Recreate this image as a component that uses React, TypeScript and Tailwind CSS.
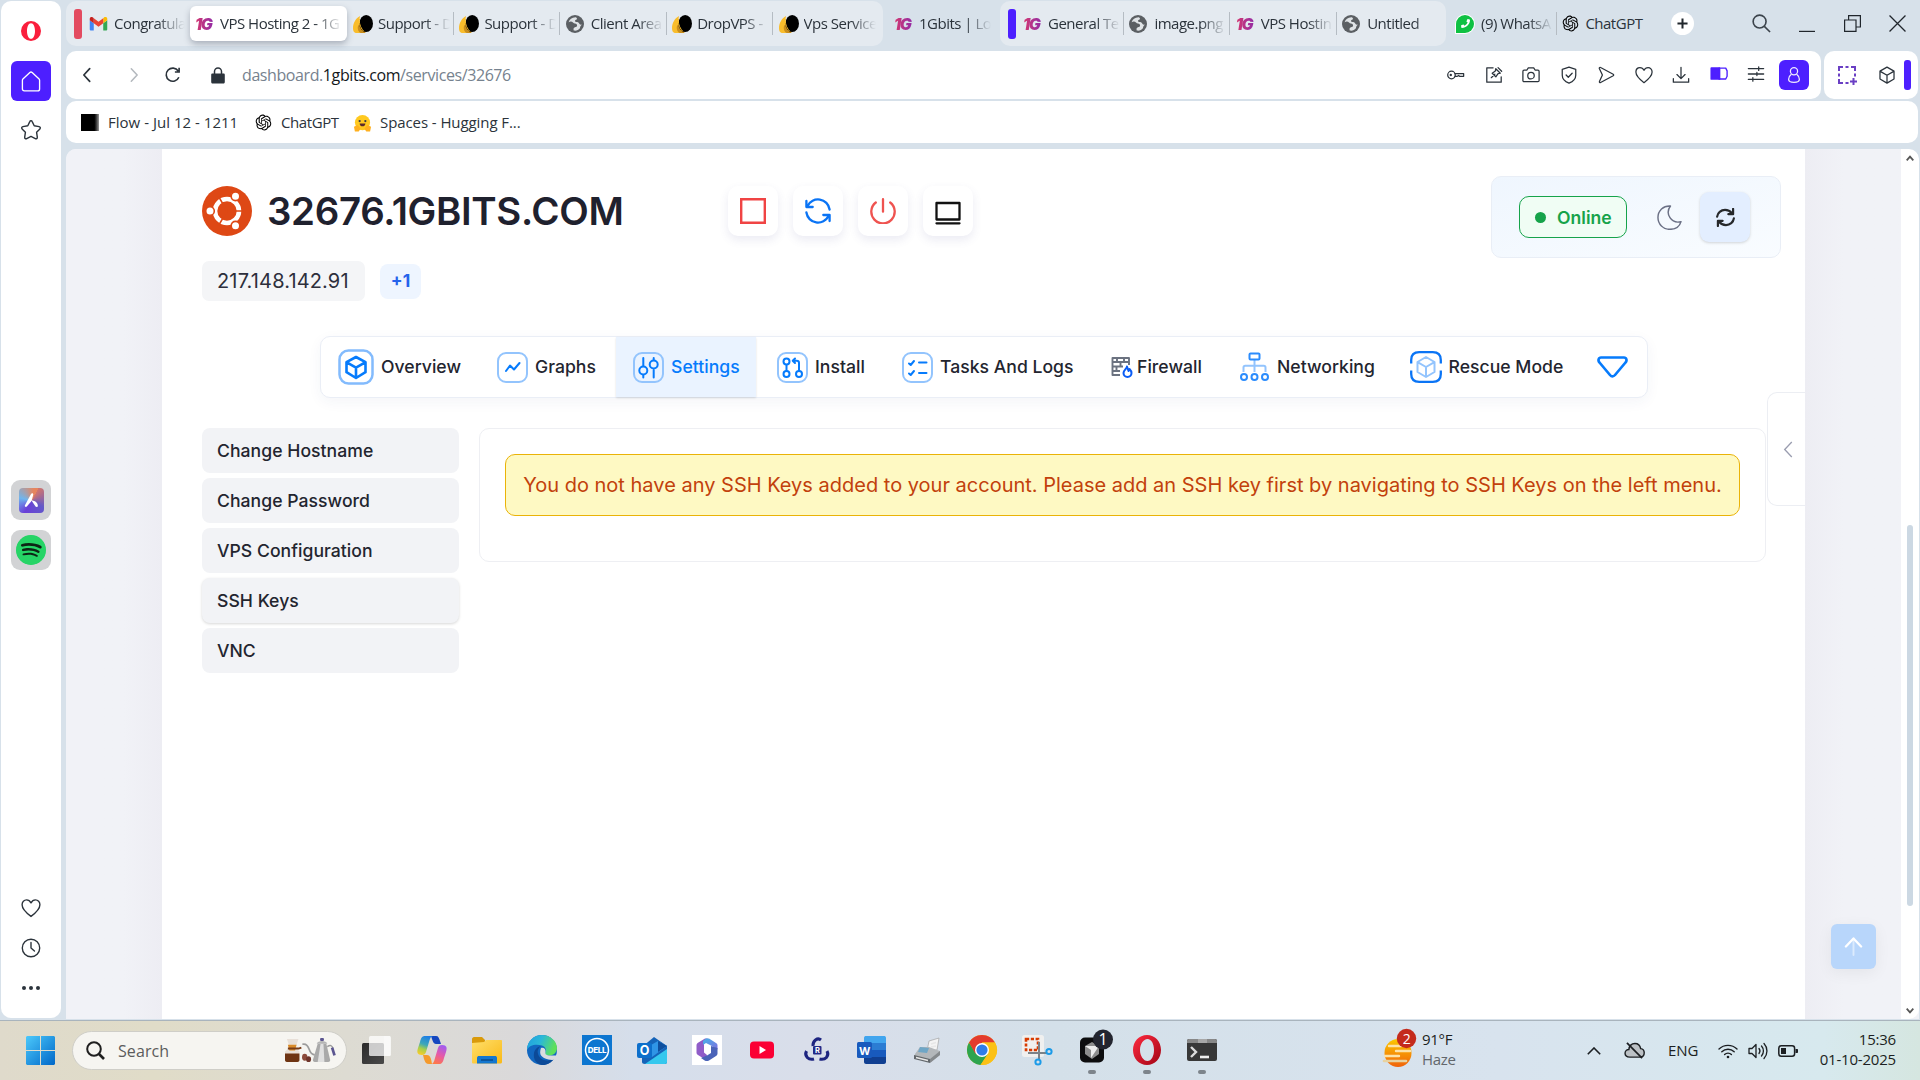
import React from "react";
import { RiOpenaiFill } from "react-icons/ri";
import { FaSpotify, FaPhoneAlt } from "react-icons/fa";

type P = { className?: string };

/* ---------- favicons ---------- */

const OneG = ({ className = "" }: P) => (
  <span
    className={`inline-block w-5 shrink-0 bg-gradient-to-r from-[#d6336c] to-[#8e24aa] bg-clip-text font-['Inter'] text-[16px] leading-5 font-black tracking-[-1.6px] text-transparent italic ${className}`}
  >
    1G
  </span>
);

const Gmail = ({ className = "" }: P) => (
  <svg viewBox="0 0 20 16" className={`h-[14px] w-[19px] shrink-0 ${className}`}>
    <path d="M1.4 15.5h3.2V7L0 3.6v10.5c0 .8.6 1.4 1.4 1.4z" fill="#4285f4" />
    <path d="M15.4 15.5h3.2c.8 0 1.4-.6 1.4-1.4V3.6L15.4 7z" fill="#34a853" />
    <path d="M15.4 1.5V7L20 3.6V2c0-1.8-2-2.7-3.4-1.7z" fill="#fbbc04" />
    <path d="M4.6 7V1.4L10 5.4l5.4-4V7L10 11z" fill="#ea4335" />
    <path d="M0 2v1.6L4.6 7V1.4L3.4.4C2-.7 0 .3 0 2z" fill="#c5221f" />
  </svg>
);

const Drop = ({ className = "" }: P) => (
  <svg viewBox="0 0 20 20" className={`size-5 shrink-0 ${className}`}>
    <path d="M7 2C3 4 0 9 0 14c0 3 1 5 4 5h7l2-4L6 8z" fill="#f9bd2c" />
    <path d="M5 12c-1 3 1 7 3 7h4l2-3-6-8z" fill="#c98d1c" />
    <ellipse cx="13.200" cy="9.500" rx="6.800" ry="8.600" fill="#000" />
    <path d="M6.500 5c-.5 4 .5 8 4 12" stroke="#f9bd2c" strokeWidth="1" fill="none" />
  </svg>
);

const Globe = ({ className = "" }: P) => (
  <svg viewBox="0 0 18 18" className={`size-[18px] shrink-0 ${className}`}>
    <circle cx="9" cy="9" r="9" fill="#5b5f63" />
    <path d="M10 2.200C6 2 3.500 4.300 2.600 7.200c1.500-1 3.400-.9 4.400.2 1 1.200 3 .8 3.800 2 .7 1.100.2 2.300-1 2.600-1.300.3-2.200.8-2.300 2l.2 1.500c2.700.5 4.800-.4 6-1.900.6-.9.2-1.700.9-2.600l1.300-1.400c-1.200.3-2.200-.1-2.700-1.100-.6-1.100-1.700-1.300-2.900-1.400-1.300-.1-1.700-1.300-.8-2 .8-.5 1.600-.8 1.500-1.700z" fill="#dfe3e6" />
  </svg>
);

const Gpt = ({ className = "" }: P) => <RiOpenaiFill className={`size-[19px] shrink-0 text-black ${className}`} />;

const Whats = ({ className = "" }: P) => (
  <span className={`flex size-[18px] shrink-0 items-center justify-center rounded-full rounded-bl-[4px] bg-[#0fc143] ring-1 ring-white ${className}`}>
    <FaPhoneAlt className="size-[9px] -scale-x-100 text-white" />
  </span>
);

/* ---------- tab strip ---------- */

function Tab({ icon, label, sep = true }: { icon: React.ReactNode; label: string; sep?: boolean }) {
  return (
    <div className="flex h-full w-[106.400px] shrink-0 items-center">
      <div className="ml-[6px] flex w-[25px] shrink-0 items-center">{icon}</div>
      <div className="w-[72px] shrink-0 overflow-hidden whitespace-nowrap [mask-image:linear-gradient(90deg,#000_65%,transparent)]">{label}</div>
      {sep && <div className="ml-[3px] h-[23px] w-px shrink-0 bg-[#b5bcc3]" />}
    </div>
  );
}

function TabStrip() {
  return (
    <div className="flex h-[46px] items-start pt-px text-[15px] tracking-[-0.500px] text-[#2b333b]">
      <div className="flex h-[45px] w-[817px] items-center rounded-[10px] bg-[#e4eaf0] pl-2">
        <div className="h-[30px] w-2 shrink-0 rounded-[3px] bg-[#e34b60]" />
        <Gmail className="ml-[7px]" />
        <div className="ml-[6px] w-[71px] shrink-0 overflow-hidden whitespace-nowrap [mask-image:linear-gradient(90deg,#000_60%,transparent)]">Congratula</div>
        <div className="ml-[5px] flex h-[35px] w-[157px] shrink-0 items-center rounded-md bg-white pl-[5px] shadow-[0_3px_6px_rgba(60,70,90,0.35)]">
          <OneG />
          <div className="ml-[5px] w-[122px] overflow-hidden whitespace-nowrap [mask-image:linear-gradient(90deg,#000_78%,transparent)]">VPS Hosting 2 - 1G</div>
        </div>
        <Tab icon={<Drop />} label="Support - D" />
        <Tab icon={<Drop />} label="Support - D" />
        <Tab icon={<Globe />} label="Client Area" />
        <Tab icon={<Drop />} label="DropVPS - " />
        <Tab icon={<Drop />} label="Vps Service" sep={false} />
      </div>
      <div className="flex h-[45px] w-[117px] items-center pl-[5px]">
        <Tab icon={<OneG />} label="1Gbits | Lo" sep={false} />
      </div>
      <div className="flex h-[45px] w-[446px] items-center rounded-[10px] bg-[#e4eaf0] pl-2">
        <div className="mr-px h-[30px] w-2 shrink-0 rounded-[3px] bg-[#4d1fff]" />
        <Tab icon={<OneG />} label="General Te" />
        <Tab icon={<Globe />} label="image.png" />
        <Tab icon={<OneG />} label="VPS Hostin" />
        <Tab icon={<Globe />} label="Untitled" sep={false} />
      </div>
      <div className="flex h-[45px] flex-1 items-center pl-[4px]">
        <Tab icon={<Whats />} label="(9) WhatsA" />
        <Gpt className="ml-[5px]" />
        <div className="ml-[5px] w-[60px] whitespace-nowrap">ChatGPT</div>
        <div className="ml-[26px] flex size-[23px] shrink-0 items-center justify-center rounded-full bg-white">
          <svg viewBox="0 0 12 12" className="size-[11px]"><path d="M6 .5v11M.5 6h11" stroke="#20262c" strokeWidth="2.200" /></svg>
        </div>
        <svg viewBox="0 0 20 20" className="ml-[58px] size-[19px]" fill="none" stroke="#3b434b" strokeWidth="1.700"><circle cx="8" cy="8" r="6.800" /><path d="M13 13l6 6" /></svg>
        <svg viewBox="0 0 16 16" className="ml-[28px] size-4" fill="none" stroke="#20262c" strokeWidth="1.200"><path d="M0 15.400h16" /></svg>
        <svg viewBox="0 0 17 17" className="ml-[29px] size-[17px]" fill="none" stroke="#20262c" strokeWidth="1.200"><path d="M.6 5h11.400v11.400H.6zM4.600 5V.6h11.800V12H12" /></svg>
        <svg viewBox="0 0 16 16" className="ml-[28px] size-[17px]" fill="none" stroke="#20262c" strokeWidth="1.200"><path d="M.5.5l15 15M15.500.5l-15 15" /></svg>
      </div>
    </div>
  );
}

/* ---------- toolbar ---------- */

const Ic = ({ children, className = "size-[18px]" }: { children: React.ReactNode; className?: string }) => (
  <svg viewBox="0 0 20 20" className={`h-[18px] w-[18px] shrink-0 ${className}`} fill="none" stroke="currentColor" strokeWidth="1.400" strokeLinecap="round" strokeLinejoin="round">
    {children}
  </svg>
);

const HeartPath = () => <path d="M10 18.500C4 14 1 10.500 1 6.700 1 3.800 3 1.800 5.500 1.800c2 0 3.600 1.200 4.500 3 .9-1.800 2.500-3 4.500-3C17 1.800 19 3.800 19 6.700c0 3.800-3 7.300-9 11.800z" />;

function Toolbar() {
  return (
    <div className="mt-[5px] flex h-12 gap-[3px]">
      <div className="flex w-[1755px] items-center rounded-[10px] bg-white text-[#2b333b]">
        <Ic className="ml-[12px]"><path d="M13 3L6.500 10 13 17" strokeWidth="1.900" /></Ic>
        <Ic className="ml-[29px] text-[#b4b9be]"><path d="M7 3l6.500 7L7 17" strokeWidth="1.700" /></Ic>
        <Ic className="ml-[21px]"><path d="M16.500 12.500A7.300 7.300 0 1 1 15.800 5.500M16.800 2v4.700h-4.700" strokeWidth="1.800" strokeLinecap="butt" strokeLinejoin="miter" /></Ic>
        <svg viewBox="0 0 14 17" className="ml-[29px] h-[17px] w-[14px] shrink-0"><path d="M1.500 6.500h11c.8 0 1.300.5 1.300 1.300V15c0 .8-.5 1.500-1.300 1.500h-11C.7 16.500.2 15.800.2 15V7.800c0-.8.500-1.300 1.300-1.300z" fill="#2b333b" /><path d="M3.500 7V4.500a3.500 3.500 0 0 1 7 0V7" stroke="#2b333b" strokeWidth="1.500" fill="none" /></svg>
        <div className="ml-[17px] w-[1205px] shrink-0 text-[16px] tracking-[-0.410px] text-[#76828e]">
          dashboard.<span className="text-[#14181c]">1gbits.com</span>/services/32676
        </div>
        <div className="flex items-center gap-[19.500px]">
          <Ic><circle cx="5" cy="10" r="4.200" /><path d="M8.700 8.500H18.500v3h-4.500l-1-1-1.500 1H8.700" /><circle cx="4.200" cy="10" r=".6" /></Ic>
          <Ic><path d="M9 2H2v16h16v-6M7 13l4-4M12 3l5 5-2.500.5L12 12 8 8l3.500-2.500zM14.500 1.800l4 4" /></Ic>
          <Ic><path d="M1 6c0-.8.500-1.300 1.300-1.300h3L7 2h6l1.700 2.700h3c.8 0 1.300.5 1.300 1.300v10c0 .8-.5 1.300-1.300 1.300H2.300C1.500 17.300 1 16.800 1 16z" /><circle cx="10" cy="10.700" r="3.600" /></Ic>
          <Ic><path d="M10 1.200l7.500 2.500v6.500c0 4-3 7-7.500 8.800-4.500-1.800-7.500-4.800-7.500-8.800V3.700zM6.800 10l2.400 2.500 4.300-4.500" /></Ic>
          <Ic><path d="M2.500 2.500c0-.8.8-1.200 1.500-.8l14 7.500c.7.400.7 1.200 0 1.600l-14 7.500c-.7.400-1.600-.2-1.300-1L6 10 2.700 3z" /></Ic>
          <Ic><HeartPath /></Ic>
          <Ic><path d="M10 1.500v12M5.500 9.500L10 14l4.500-4.500M1.500 14v4h17v-4" /></Ic>
          <Ic className="-mt-[3px] text-[#4d1fff]"><path d="M1.500 3.500h9v12h-9z" fill="currentColor" strokeWidth="2" /><path d="M10 3.500h7.500l1.500 3v6l-1.500 3H10" strokeWidth="1.500" /></Ic>
          <Ic className="-mt-[2px]"><path d="M1.500 4h17M1.500 10h17M1.500 16h17M13 2v4M6.500 14v4M11 8.200v3.600" /></Ic>
        </div>
        <div className="ml-[14px] flex size-[30px] shrink-0 items-center justify-center rounded-md bg-[#4d1fff] text-[#efeaff]">
          <Ic><circle cx="10" cy="5.800" r="4" /><path d="M6.800 9.500C5 10.800 4 12.600 4 14.800 4 17.500 6.500 18.300 10 18.300s6-.8 6-3.500c0-2.200-1-4-2.800-5.300" /></Ic>
        </div>
      </div>
      <div className="flex w-[94px] items-center rounded-[10px] bg-white">
        <svg viewBox="0 0 20 20" className="ml-[13px] size-5" fill="none" stroke="#6a3fc4" strokeWidth="2"><path d="M2 6V2h4M8.500 2h3M14 2h4v4M18 8.500v3M2 8.500v3M2 14v4h4M8.500 18h3M13 16.500h7M16.500 13v7" /></svg>
        <Ic className="ml-[21px] text-[#2b333b]"><path d="M10 1.200l7.800 4.500v8.800L10 19l-7.800-4.500V5.700zM2.500 6L10 10.200 17.500 6M10 10.200V19" /></Ic>
        <div className="ml-[8px] h-[30px] w-[7px] shrink-0 rounded-[3px] bg-[#4d1fff]" />
      </div>
    </div>
  );
}

function Bookmarks() {
  return (
    <div className="mt-[2px] flex h-[42px] w-[1852px] items-center rounded-[10px] bg-white pt-px text-[15px] tracking-[-0.400px] text-[#2b333b]">
      <div className="ml-[15px] h-[17px] w-[18px] bg-gradient-to-r from-black from-70% to-[#999]" />
      <div className="ml-[9px] w-[136px] whitespace-nowrap tracking-[0.020px]">Flow - Jul 12 - 1211</div>
      <Gpt className="ml-[10px]" />
      <div className="ml-[8px] w-[64px]">ChatGPT</div>
      <svg viewBox="0 0 20 18" className="ml-[8px] h-[18px] w-[19px]">
        <circle cx="10" cy="8.500" r="8" fill="#ffc91f" />
        <path d="M1 13l4-2 3 4-2 3H2zM19 13l-4-2-3 4 2 3h4z" fill="#ffb01f" />
        <circle cx="7" cy="7" r="1.200" fill="#3a3b45" /><circle cx="13" cy="7" r="1.200" fill="#3a3b45" />
        <path d="M7 9.500h6c0 4-6 4-6 0z" fill="#5b2b2b" />
      </svg>
      <div className="ml-[8px] whitespace-nowrap tracking-[-0.080px]">Spaces - Hugging F...</div>
    </div>
  );
}

/* ---------- browser sidebar ---------- */

function Sidebar() {
  return (
    <div className="mt-px ml-px flex h-[1017px] w-[60px] flex-col items-center rounded-[10px] bg-white text-[#2b333b]">
      <svg viewBox="0 0 20 20" className="mt-5 size-5"><path fillRule="evenodd" d="M10 0a10 10 0 1 0 0 20 10 10 0 0 0 0-20zm0 2.200c2.500 0 4 3.500 4 7.800s-1.500 7.800-4 7.800S6 14.300 6 10s1.500-7.800 4-7.800z" fill="#fa1e3c" /></svg>
      <div className="mt-5 flex size-10 items-center justify-center rounded-md bg-[#4d1fff]">
        <svg viewBox="0 0 20 22" className="h-[21px] w-5" fill="none" stroke="#fff" strokeWidth="1.400" strokeLinejoin="round"><path d="M8.800 1.500c.7-.6 1.700-.6 2.400 0l7 6.500c.5.600.8 1 .8 1.800v9c0 1.200-.8 2-2 2H3c-1.200 0-2-.8-2-2v-9c0-.8.300-1.200.8-1.800z" /></svg>
      </div>
      <svg viewBox="0 0 22 22" className="mt-[18px] mr-px size-[22px]" fill="none" stroke="currentColor" strokeWidth="1.400" strokeLinejoin="round"><path d="M11 1.800c.5 0 1 .3 1.200.8l2 4.200 4.900.8c1.200.2 1.600 1.500.8 2.300l-3.300 3.400.7 4.900c.1 1.200-1 2-2 1.400L11 17.400l-4.300 2.200c-1 .6-2.100-.2-2-1.400l.7-4.900L2.100 9.900c-.8-.8-.4-2.100.8-2.300l4.900-.8 2-4.200c.2-.5.700-.8 1.200-.8z" /></svg>
      <div className="mt-[339px] flex size-10 items-center justify-center rounded-[9px] bg-[#d2d3d5]">
        <div className="flex size-[25px] items-center justify-center rounded-[4px] bg-[conic-gradient(from_30deg,#d2756b,#6359c9_25%,#6a3fd8_50%,#6fb6ee_70%,#e6855e_95%)]">
          <svg viewBox="0 0 16 16" className="size-[15px]"><path d="M7.500 1c1-1.500 2.800-.5 2.300 1L8.500 7c-.5 2-1.500 3-3 4.500l-2.500 3c-1.200 1-2.600 0-2-1.500zM8 8c3.800 0 6.500 2.300 6.800 5.500.1 1.500-1.500 2-2.500 1z" fill="#fff" /></svg>
        </div>
      </div>
      <div className="mt-[10px] flex size-10 items-center justify-center rounded-[9px] bg-[#d2d3d5]">
        <span className="flex size-[30px] items-center justify-center rounded-full bg-[radial-gradient(#0d2415_60%,#26d466_62%)]"><FaSpotify className="size-[30px] text-[#26d466]" /></span>
      </div>
      <Ic className="mt-[329px] mr-px scale-110"><HeartPath /></Ic>
      <Ic className="mt-[22px] mr-px scale-110"><circle cx="10" cy="10" r="8.800" /><path d="M10 4.500V10l3.500 3" /></Ic>
      <div className="mt-[29px] mr-px flex gap-[3px]">
        <i className="size-1 rounded-full bg-[#2b333b]" /><i className="size-1 rounded-full bg-[#2b333b]" /><i className="size-1 rounded-full bg-[#2b333b]" />
      </div>
    </div>
  );
}

/* ---------- page ---------- */

const Ubuntu = () => (
  <svg viewBox="0 0 50 50" className="size-[50px]">
    <circle cx="25" cy="25" r="25" fill="#de4815" />
    <circle cx="25" cy="25" r="12" fill="none" stroke="#fff" strokeWidth="4.600" />
    <path d="M25 25h17M25 25l-8.500-14.700M25 25l-8.500 14.700" stroke="#de4815" strokeWidth="1.600" />
    <g fill="#fff" stroke="#de4815" strokeWidth="1.600"><circle cx="8" cy="25" r="4.300" /><circle cx="33.500" cy="10.300" r="4.300" /><circle cx="33.500" cy="39.700" r="4.300" /></g>
  </svg>
);

const Action = ({ children }: { children: React.ReactNode }) => (
  <div className="flex size-[50px] items-center justify-center rounded-[10px] bg-white shadow-[0_4px_10px_rgba(70,70,150,0.110)]">{children}</div>
);

function Header() {
  return (
    <div className="flex">
      <div className="w-[526px] pt-[10px]">
        <div className="flex h-[50px] items-center">
          <Ubuntu />
          <h1 className="ml-[15px] text-[38.400px] leading-[50px] font-semibold tracking-[-0.320px] whitespace-nowrap text-[#1f212e]">32676.1GBITS.COM</h1>
        </div>
        <div className="mt-[25px] flex items-center">
          <div className="flex h-10 w-[163px] items-center rounded-[7px] bg-[#f4f5f7] pl-[15px] text-[20px] tracking-[0.150px] text-[#2d2f3c]">217.148.142.91</div>
          <div className="ml-[15px] flex h-[35px] w-[41px] items-center justify-center rounded-lg bg-[#eef5ff] pt-px text-[17.500px] font-bold text-[#2563eb]">+1</div>
        </div>
      </div>
      <div className="flex gap-[15px] pt-[10px]">
        <Action><svg viewBox="0 0 26 26" className="size-[26px]"><path d="M1.200 1.200h23.600v23.600H1.200z" fill="none" stroke="#f04444" strokeWidth="2.400" /></svg></Action>
        <Action><svg viewBox="0 0 26 26" className="size-[26px]" fill="none" stroke="#0a74f5" strokeWidth="2.300" strokeLinecap="round" strokeLinejoin="round"><path d="M24.600 11.500A11.700 11.700 0 0 0 2.500 8M1.400 3v6h6.300M1.400 14.500A11.700 11.700 0 0 0 23.500 18M24.600 23v-6h-6.300" /></svg></Action>
        <Action><svg viewBox="0 0 26 26" className="size-[26px]" fill="none" stroke="#ef5350" strokeWidth="2.300" strokeLinecap="round"><path d="M13 1.200v12.500M5.800 4.500a11.700 11.700 0 1 0 14.400 0" /></svg></Action>
        <Action><svg viewBox="0 0 26 26" className="mt-[3px] size-[26px]" fill="none" stroke="#111" strokeWidth="2.300" strokeLinejoin="round"><path d="M1.500 3h23v16.500h-23zM1.500 23.300h23" strokeLinecap="round" /></svg></Action>
      </div>
      <div className="ml-auto flex h-[82px] w-[290px] rounded-[10px] border border-[#e9eef6] bg-gradient-to-br from-[#eff6fe] to-[#f9fcff] pl-[27px]">
        <div className="mt-[19px] flex h-[42px] w-[108px] items-center rounded-[10px] border border-[#16a34a] bg-[#f0fdf4] pl-[15px] text-[17.600px] font-semibold text-[#16a34a]">
          <span className="mr-[11px] size-[11px] rounded-full bg-[#16a34a]" />
          <span className="pt-[2px]">Online</span>
        </div>
        <svg viewBox="0 0 26 26" className="mt-[28px] ml-[30px] size-[25px]" fill="none" stroke="#6b7085" strokeWidth="1.500" strokeLinejoin="round"><path d="M14 1C6.500.5 1 6 1 13c0 7 5.500 12.300 12.300 12.300 5.500 0 10.200-3 11.700-8C15 20 8 9 14 1z" /></svg>
        <div className="mt-[15px] ml-[18px] flex size-[50px] items-center justify-center rounded-[9px] bg-[#e3eeff] shadow-[0_1px_3px_rgba(0,0,0,0.160)]">
          <svg viewBox="0 0 20 20" className="size-[19px]" fill="none" stroke="#26282b" strokeWidth="2.300" strokeLinecap="round" strokeLinejoin="round"><path d="M1.200 9c.5-4 4-7 8.300-7 3 0 5.500 1.300 7.200 3.500M18 1v5.500h-5M18.800 11c-.5 4-4 7-8.300 7-3 0-5.500-1.300-7.200-3.500M2 19v-5.500h5" /></svg>
        </div>
      </div>
    </div>
  );
}

const Box = ({ children }: { children: React.ReactNode }) => (
  <svg viewBox="0 0 31 31" className="size-[31px]" fill="none" stroke="#067bfc" strokeWidth="2" strokeLinecap="round" strokeLinejoin="round">
    <rect x="1" y="1" width="29" height="29" rx="8" stroke="#93c4fd" />
    {children}
  </svg>
);

const CubeLines = () => <path d="M15.500 5.500l8.500 5v10l-8.500 5-8.500-5v-10zM7.500 10.800l8 4.700 8-4.700M15.500 15.500v9.500" />;

function NavItem({ icon, label, className }: { icon: React.ReactNode; label: string; className: string }) {
  return (
    <div className={`flex h-full shrink-0 items-center whitespace-nowrap ${className}`}>
      {icon}
      <span className="pt-px">{label}</span>
    </div>
  );
}

function Nav() {
  return (
    <div className="ml-[118px] flex h-[62px] w-[1328px] items-center rounded-[10px] border border-[#eaeef6] bg-white text-[17.600px] font-[450] tracking-[0.020px] text-[#23252f] shadow-[0_4px_14px_rgba(40,60,120,0.050)]">
      <NavItem
        className="w-[159px] gap-[7px] pl-[17px]"
        label="Overview"
        icon={
          <svg viewBox="0 0 36 36" className="size-9" fill="none" stroke="#067bfc" strokeWidth="2.600" strokeLinecap="round" strokeLinejoin="round">
            <rect x="1.500" y="1.500" width="33" height="33" rx="9" stroke="#83bbfd" strokeWidth="2.500" />
            <path d="M18 8l9.500 5.200v10L18 29l-9.500-5.800v-10zM8.800 13.300l9.200 5.400 9.200-5.400M18 18.700V28.500" />
          </svg>
        }
      />
      <NavItem className="w-[136px] gap-[7px] pl-[17px]" label="Graphs" icon={<Box><path d="M9 19l4-5.500 4 4L22.500 11" /></Box>} />
      <NavItem
        className="w-[140px] gap-[7px] bg-[#eaf3ff] pl-[17px] text-[#067bfc] shadow-[0_1px_2px_rgba(0,0,0,0.120)]"
        label="Settings"
        icon={<Box><path d="M10.300 6v8M10.300 23v2.500M20.700 25.500V18M20.700 6v2" /><circle cx="10.300" cy="18.500" r="4" /><circle cx="20.700" cy="12.500" r="4" /></Box>}
      />
      <NavItem
        className="w-[125px] gap-[7px] pl-[21px]"
        label="Install"
        icon={<Box><circle cx="9.500" cy="9.500" r="3" /><circle cx="9.500" cy="22" r="3" /><circle cx="22" cy="22" r="3" /><path d="M9.500 13v5.500M22 18.500V11c0-1.500-.8-2.300-2.300-2.300H16M18 6.500l-2.300 2.200L18 11" /></Box>}
      />
      <NavItem
        className="w-[209px] gap-[7px] pl-[21px]"
        label="Tasks And Logs"
        icon={<Box><path d="M17 10.500h7.500M17 21h7.500M7 11.500l1.700 1.500L12 9M7 21.500L8.700 23 12 19" /></Box>}
      />
      <NavItem
        className="w-[128px] gap-[4px] pl-[21px]"
        label="Firewall"
        icon={
          <svg viewBox="0 0 22 22" className="size-[22px]" fill="none" stroke="#6b7280" strokeWidth="1.900" strokeLinejoin="round">
            <path d="M18 9V2H1.500v17H9M1.500 6h16.500M1.500 10.500H12M1.500 15H9M6 2v4M13 2v4M9.500 6v4.500M5.500 10.500V15" />
            <path d="M16 10.500c0 2-3.500 3.500-3.500 6.500 0 2.300 1.700 4 4 4s4-1.700 4-4c0-2-1-3-2-4l-1 2z" stroke="#0a5cf5" strokeWidth="2" fill="#fff" />
          </svg>
        }
      />
      <NavItem
        className="w-[170px] gap-[8px] pl-[22px]"
        label="Networking"
        icon={
          <svg viewBox="0 0 29 30" className="h-[30px] w-[29px]" fill="none" stroke="#2b8cfd" strokeWidth="2">
            <path d="M14.500 8v12M3.500 20v-4.500c0-1 .7-1.700 1.700-1.700h18.600c1 0 1.700.7 1.700 1.700V20" stroke="#93c4fd" />
            <rect x="9.500" y="1.500" width="10" height="6" rx="1" />
            <circle cx="4" cy="25" r="3" /><circle cx="14.500" cy="25" r="3" /><circle cx="25" cy="25" r="3" />
          </svg>
        }
      />
      <NavItem
        className="w-[188px] gap-[7px] pl-[21.500px]"
        label="Rescue Mode"
        icon={
          <svg viewBox="0 0 32 32" className="size-8" fill="none" stroke="#93c4fd" strokeWidth="2" strokeLinejoin="round">
            <path d="M1.200 12.500V9c0-5 3-7.800 8-7.800h13.600c5 0 8 2.800 8 7.800v3.500M1.200 19.500V23c0 5 3 7.800 8 7.800h13.600c5 0 8-2.800 8-7.800v-3.500" stroke="#0a74f5" strokeWidth="2.300" />
            <g transform="translate(.5 .5)"><CubeLines /></g>
          </svg>
        }
      />
      <svg viewBox="0 0 31 22" className="ml-[21px] h-[22px] w-[31px]" fill="none" stroke="#067bfc" strokeWidth="2.700" strokeLinejoin="round"><path d="M4 1.500h23c2.500 0 3.300 3 1.500 5L18 19c-1.500 1.800-3.500 1.800-5 0L2.500 6.500C.7 4.500 1.500 1.500 4 1.500z" /></svg>
    </div>
  );
}

const menu = ["Change Hostname", "Change Password", "VPS Configuration", "SSH Keys", "VNC"];

function Page() {
  return (
    <div className="mt-[6px] flex h-[870px] w-[1853px] overflow-hidden rounded-t-[10px] bg-[#f1f2f7]">
      <div className="w-24 shrink-0 bg-gradient-to-r from-[#f1f2f7] from-60% to-[#ededf3]" />
      <main className="flex w-[1643px] shrink-0 flex-col bg-white pt-[27px] pl-10 font-['Inter',sans-serif]">
        <div className="w-[1579px]"><Header /></div>
        <div className="mt-[35px] flex">
          <div className="w-[1565px] shrink-0">
            <Nav />
            <div className="mt-[30px] flex items-start">
              <div className="flex w-[257px] flex-col gap-[5px] text-[17.600px] font-[450] tracking-[0.040px] text-[#23252f]">
                {menu.map((m) => (
                  <div key={m} className={`flex h-[45px] items-center rounded-lg bg-[#f2f3f6] pt-px pl-[15px] ${m === "SSH Keys" ? "shadow-[0_1px_3px_rgba(0,0,0,0.160)]" : ""}`}>{m}</div>
                ))}
              </div>
              <div className="ml-5 h-[134px] w-[1287px] rounded-[10px] border border-[#eeeff3] px-[25px] pt-[25px]">
                <div className="flex h-[62px] items-center justify-center rounded-[10px] border border-[#eab308] bg-[#fef9c3] text-[20px] whitespace-nowrap text-[#c2410c]">
                  You do not have any SSH Keys added to your account. Please add an SSH key first by navigating to SSH Keys on the left menu.
                </div>
              </div>
            </div>
          </div>
          <div className="mt-[56px] flex h-[114px] w-[39px] shrink-0 items-center rounded-l-[10px] border border-r-0 border-[#eceef3] bg-white pl-[15px]">
            <svg viewBox="0 0 10 18" className="h-[17px] w-[10px]" fill="none" stroke="#9a9db0" strokeWidth="1.400"><path d="M9 1L1.500 9 9 17" /></svg>
          </div>
        </div>
      </main>
      <div className="flex flex-1 items-end bg-gradient-to-r from-[#ededf3] to-[#f1f2f7] to-40% pb-[50px] pl-[26px]">
        <div className="flex size-[45px] items-center justify-center rounded-md bg-[#b8d6fb] shadow-[0_4px_16px_rgba(0,0,0,0.060)]">
          <svg viewBox="0 0 20 20" className="size-[19px]" fill="none" strokeLinecap="round" strokeLinejoin="round"><path d="M10 3v16" stroke="#dcebfd" strokeWidth="2" /><path d="M2 10l8-8.500 8 8.500" stroke="#fff" strokeWidth="2.400" /></svg>
        </div>
      </div>
      <div className="flex w-[18px] shrink-0 flex-col items-center rounded-r-[10px] bg-white">
        <svg viewBox="0 0 8 6" className="mt-[6px] h-[6px] w-2"><path d="M.7 5.300L4 1.700l3.300 3.600" stroke="#555" strokeWidth="1.800" fill="none" /></svg>
        <div className="mt-[364px] h-[381px] w-[6px] rounded-full bg-[#ccd8e3]" />
        <svg viewBox="0 0 8 6" className="mt-[102px] h-[6px] w-2"><path d="M.7.7L4 4.300 7.300.7" stroke="#555" strokeWidth="1.800" fill="none" /></svg>
      </div>
    </div>
  );
}

/* ---------- taskbar ---------- */

const S = ({ children, running = false }: { children: React.ReactNode; running?: boolean }) => (
  <div className="flex h-full w-[55px] shrink-0 flex-col items-center pt-[14px]">
    <svg viewBox="0 0 30 30" className="size-[30px] overflow-visible">{children}</svg>
    {running && <div className="mt-[5px] h-1 w-2 rounded-full bg-[#7d848b]" />}
  </div>
);

const LinGrad = ({ id, a, b }: { id: string; a: string; b: string }) => (
  <linearGradient id={id} x1="0" y1="0" x2="1" y2="1"><stop offset="0" stopColor={a} /><stop offset="1" stopColor={b} /></linearGradient>
);

function SearchArt() {
  return (
    <svg viewBox="0 0 54 26" className="h-[25px] w-[54px] shrink-0">
      <path d="M3 1h12l-3 9 4 4v9c0 1.500-1 2-2 2H3c-1.500 0-2-1-2-2v-9l5-4z" fill="#e8e0d8" />
      <path d="M4 7h9l-1.500 6h-6z" fill="#d98c2b" /><path d="M1 16h15v7c0 1.500-1 2-2 2H3c-1.500 0-2-1-2-2z" fill="#6e3413" />
      <path d="M4 11h11l3-1" stroke="#7a3c17" strokeWidth="2" fill="none" />
      <ellipse cx="21.500" cy="20" rx="2.800" ry="3.600" fill="#8c4a3a" /><ellipse cx="25.500" cy="22" rx="2.600" ry="3" fill="#6e342a" />
      <path d="M19 6.500c4-1 6 2 7 5s3 6 6 6" stroke="#9c9c9c" strokeWidth="1.800" fill="none" />
      <path d="M35 6h9l4 17c0 1.500-1 2-2 2H32c-1.500 0-2-1-2-2z" fill="#a9a9a9" /><path d="M38 6h3l1 19h-7z" fill="#e0e0e0" />
      <path d="M34 6c1-4 10-4 11 0z" fill="#b5b5b5" /><rect x="37.500" y="0" width="4" height="3" rx="1" fill="#5b5590" />
      <path d="M45 9c3-2 5-1.500 6 2" stroke="#9a9a9a" strokeWidth="1.400" fill="none" /><path d="M50 10l2.500 8" stroke="#5b5590" strokeWidth="2.800" fill="none" />
    </svg>
  );
}

function Taskbar() {
  return (
    <div className="flex h-[60px] items-center border-t border-[#a9b4bd] bg-[linear-gradient(90deg,#dfdacb_0%,#e0dcc8_8%,#dddbd2_18%,#dad9da_27%,#d5deeb_33%,#d9deea_42%,#d4e0e9_55%,#d8e3ee_78%,#d7e9ee_95%,#d5e6e0_100%)] text-[15px] tracking-[-0.300px] text-[#1c1f22]">
      <svg viewBox="0 0 29 29" className="ml-[26px] size-[29px]">
        <defs><LinGrad id="win" a="#4cc9fb" b="#0067c8" /></defs>
        <path d="M1 0h13v14H0V1zM15 0h13l1 1v13H15zM0 15h14v14H1l-1-1zM15 15h14v13l-1 1H15z" fill="url(#win)" />
      </svg>
      <div className="ml-[17px] flex h-[39px] w-[275px] items-center rounded-full border border-[#cfcec8] bg-[#f6f5f1] pl-[13px]">
        <svg viewBox="0 0 19 19" className="size-[19px]" fill="none" stroke="#1f1f1f" strokeWidth="2"><circle cx="8" cy="8" r="6.800" /><path d="M13 13l5 5" strokeWidth="2.600" /></svg>
        <span className="ml-[13px] w-[165px] text-[16px] tracking-[0.100px] text-[#5c5c5c]">Search</span>
        <SearchArt />
      </div>
      <div className="ml-[2px] flex h-full">
        <S><defs><LinGrad id="tv" a="#2a2a2a" b="#4a4a4a" /></defs><rect x="0" y="8" width="22" height="21" rx="1.500" fill="url(#tv)" /><rect x="7" y="1" width="22" height="20" rx="1.500" fill="#fff" opacity=".75" /><path d="M22 1h6v20h-6z" fill="#fff" opacity=".4" /></S>
        <S>
          <defs>
            <linearGradient id="cp1" x1=".6" y1="0" x2=".3" y2="1"><stop offset="0" stopColor="#1d7ee6" /><stop offset=".45" stopColor="#3fa8b8" /><stop offset=".7" stopColor="#a9cf4a" /><stop offset="1" stopColor="#f6cc2a" /></linearGradient>
            <linearGradient id="cp2" x1=".7" y1="0" x2=".3" y2="1"><stop offset="0" stopColor="#a05cf0" /><stop offset=".5" stopColor="#e65aa8" /><stop offset="1" stopColor="#ff7a45" /></linearGradient>
          </defs>
          <path d="M15 1h4c2.500 0 3 2 4 5l1 3h-5c-3 0-3.500-4-5-8z" fill="#1547c0" />
          <path d="M8 1h8c-2 0-3 2-4 6l-3 10c-.7 2-1.500 3-4 3C0 20-.3 17 1 13L3 7c1-4 2-6 5-6z" fill="url(#cp1)" />
          <path d="M6 20h4c3 0 4 3 5 9h-3c-3 0-4-2-5-5z" fill="#f59a2c" />
          <path d="M22 29h-8c2 0 3-2 4-6l3-10c.7-2 1.500-3 4-3 5 0 5.300 3 4 7l-2 6c-1 4-2 6-5 6z" fill="url(#cp2)" />
        </S>
        <S><defs><LinGrad id="fo" a="#ffdf6b" b="#f9b917" /></defs><path d="M0 4c0-1 1-2 2-2h8l3 3v6H0z" fill="#d99a0b" /><path d="M0 8l12-1 2-2h15c.6 0 1 .4 1 1v21c0 1-1 1.500-1.500 1.500h-27C.5 28.500 0 28 0 27z" fill="url(#fo)" /><path d="M5 28.500V23c0-1.500 1-2 2-2h16c1 0 2 .5 2 2v5.500z" fill="#1477cf" /><path d="M9 25h12" stroke="#0a4b8c" strokeWidth="1.500" /></S>
        <S>
          <defs><linearGradient id="ed" x1="0" y1="0" x2="1" y2=".3"><stop offset="0" stopColor="#1f9fe0" /><stop offset=".5" stopColor="#2bb8d8" /><stop offset="1" stopColor="#5ee05a" /></linearGradient></defs>
          <circle cx="15" cy="15" r="15" fill="#1267c0" />
          <path d="M0 15C0 6 7 0 15 0s15 6 15 13c0 5-4 7.500-8 7.500-3 0-4.500-1-4-2.500 1.500-1.500 1.500-6-3-7.500C9 8.500 2 10 0 15z" fill="url(#ed)" />
          <path d="M14 11c-3 2-4 5-3 8 2 6 8 8 16 5l-3 3c-3 2.500-6 3-9 3C9 29 6 24 7 18c.5-3 3-6 7-7z" fill="#0c4a98" />
          <path d="M14 13c3-1 5 1.500 4.500 4-.5 1.500 0 3 3.500 3.500h7l2 3c-5 3-15 1-17.500-4-.8-2 0-5 .5-6.500z" fill="#dadcdf" />
        </S>
        <S><path d="M0 0h30v30H0z" fill="#0d76d0" /><circle cx="15" cy="15" r="11.500" fill="none" stroke="#fff" strokeWidth="1.500" /><text x="15" y="18.200" textAnchor="middle" fontFamily="Inter" fontWeight="800" fontSize="8" fill="#fff" letterSpacing="-.3">DELL</text></S>
        <S><path d="M5 12L17 2l13 9v16c0 1-1 2-2 2H8c-2 0-3-1-3-2z" fill="#1563b8" /><path d="M7 14l14-8 9 5-15 11z" fill="#2f95e6" /><path d="M21 6l9 5-9 6z" fill="#0e4f9e" /><path d="M8 29l22-15v13c0 1-1 2-2 2z" fill="#35c8ee" /><rect x="0" y="8" width="15" height="15" rx="2" fill="#0d6fcb" /><text x="7.500" y="20" textAnchor="middle" fontFamily="Inter" fontWeight="700" fontSize="12.500" fill="#fff">O</text></S>
        <S>
          <defs><LinGrad id="m3" a="#45b3e8" b="#7f6fe0" /></defs>
          <path d="M0 0h30v30H0z" fill="#fff" />
          <path d="M13 3.500h3l-4 5v9l3 2.500-1 5-8-5c-1-.6-1.500-1.300-1.500-2.500v-7c0-1.300.5-2 1.500-2.700z" fill="#8f5cc8" />
          <path d="M14 3.500h3l7 4.500c1 .6 1.500 1.500 1.500 2.500v4l-6.500-4-5-2.500-3 2v-4z" fill="url(#m3)" />
          <path d="M25.500 13v5.500c0 1-.5 1.800-1.500 2.500l-7 4.500c-1.300.8-3 .8-4.300 0L9 23l6-2.500 4-2.500v-7z" fill="#4a63b8" />
        </S>
        <S><rect x="3" y="6.500" width="24" height="17" rx="4" fill="#fb0034" /><path d="M12.500 11v8l6.500-4z" fill="#fff" /></S>
        <S><g fill="none" stroke="#1d2480" strokeWidth="3"><path d="M11 11c-.5-5 4.500-9 8-6" /><path d="M4.500 16c-2.500 5 2 9.500 7.500 8" /><path d="M17.500 24c6 1.500 10-3 7.500-8" /></g><rect x="11" y="11" width="8.500" height="8.500" rx="1" fill="#232a88" /><text x="15.200" y="18" textAnchor="middle" fontFamily="Inter" fontWeight="700" fontSize="7.500" fill="#fff">R</text></S>
        <S><path d="M9 1h18c1 0 2 .5 2 2v7H7V3c0-1.500 1-2 2-2z" fill="#41a5ee" /><path d="M7 8h22v7H7z" fill="#2b7cd3" /><path d="M7 15h22v7H7z" fill="#185abd" /><path d="M7 22h22v5c0 1-1 2-2 2H9c-1 0-2-1-2-2z" fill="#103f91" /><rect x="0" y="7" width="15" height="16" rx="1.500" fill="#185abd" /><text x="7.500" y="19.500" textAnchor="middle" fontFamily="Inter" fontWeight="700" fontSize="11" fill="#fff">W</text></S>
        <S><path d="M17 6l10-3-2 12-10 1z" fill="#f4f4f4" stroke="#999" strokeWidth=".6" /><path d="M3 19l5-7h9l8 3 3 1v4l-9 7-17-4z" fill="#b3b7ba" /><path d="M8 12l9 1-2 5-9-1z" fill="#6fa6c6" /><path d="M2 20l16 4v4L2 24z" fill="#62676b" /><path d="M4 22.500l12 3M19 9l5-1.500M19 12l5-1" stroke="#e7e7e7" strokeWidth="1.400" /><path d="M18 24l10-8v4l-10 8z" fill="#85898c" /></S>
        <S>
          <circle cx="15" cy="15" r="15" fill="#fbc116" />
          <path d="M15 15L2 7.500A15 15 0 0 1 28 7.500H15z" fill="#e33b2e" /><path d="M2 7.500A15 15 0 0 0 13.500 30L21 18.500H9z" fill="#2da44e" />
          <path d="M2 7.500L8.500 18.700 15 8z" fill="#e33b2e" /><path d="M28 7.500A15 15 0 0 1 13.500 30L21.500 18.500 15 7.500z" fill="#fbc116" />
          <circle cx="15" cy="15" r="7" fill="#fff" /><circle cx="15" cy="15" r="5.600" fill="#2f7de9" />
        </S>
        <S><rect x="0" y="0" width="22" height="22" rx="2.500" fill="#f0f0ef" /><path d="M4 4h12v11H4z" fill="none" stroke="#d83b01" strokeWidth="2.600" strokeDasharray="3.200 1.600" /><path d="M17 7v17M6 18h19" stroke="#7b8288" strokeWidth="2" /><circle cx="16" cy="27" r="2.600" fill="none" stroke="#1c9be8" strokeWidth="2" /><circle cx="27" cy="16.500" r="2.600" fill="none" stroke="#1c9be8" strokeWidth="2" /></S>
        <S running><rect x="3" y="2.500" width="24" height="25" rx="5" fill="#0d0d0e" /><path d="M15 7l7 4v8l-7 5-7-5v-8z" fill="#8d8d8d" /><path d="M8 11l14 0-8 12v-8z" fill="#ececec" /><circle cx="26" cy="4.500" r="10" fill="#23252f" /><text x="26" y="10" textAnchor="middle" fontFamily="Open Sans" fontSize="16" fill="#fff">1</text></S>
        <S running><defs><LinGrad id="op" a="#ff2a40" b="#a10514" /></defs><path fillRule="evenodd" d="M15 0C7 0 1 6.500 1 15s6 15 14 15 14-6.500 14-15S23 0 15 0zm.5 4c4 0 6.500 5 6.500 11s-2.500 11-6.500 11S8 21 8 15s3.500-11 7.500-11z" fill="url(#op)" /></S>
        <S running><rect x="0" y="4" width="30" height="22" rx="2" fill="#383838" /><path d="M0 8V6c0-1 1-2 2-2h26c1 0 2 1 2 2v2z" fill="#888" /><path d="M11 4h9v4h-9z" fill="#a8a8a8" /><path d="M4 12l5 5-5 5" stroke="#ddd" strokeWidth="2.400" fill="none" /><path d="M13 22h9" stroke="#eee" strokeWidth="2.600" /></S>
      </div>
      <div className="ml-[153px] flex h-full items-center pb-[3px]">
        <svg viewBox="0 0 36 42" className="h-[42px] w-9">
          <defs><linearGradient id="hz" x1="0" y1="0" x2="0" y2="1"><stop offset="0" stopColor="#fcc800" /><stop offset="1" stopColor="#f0620a" /></linearGradient></defs>
          <ellipse cx="16" cy="25" rx="13.500" ry="14" fill="url(#hz)" />
          <path d="M7 18h12M14 23h14M3 28h14" stroke="#fde3a8" strokeWidth="2.400" strokeLinecap="round" /><path d="M2 33h22" stroke="#e8d2a0" strokeWidth="2.600" strokeLinecap="round" />
          <circle cx="24.500" cy="10.500" r="9.700" fill="#c42b1c" /><text x="24.500" y="15.500" textAnchor="middle" fontFamily="Open Sans" fontSize="14" fill="#fff">2</text>
        </svg>
        <div className="ml-[4px] w-[60px] leading-5"><div>91°F</div><div className="text-[#62676c]">Haze</div></div>
      </div>
      <div className="ml-auto flex items-center pr-[24px]">
        <svg viewBox="0 0 14 8" className="h-2 w-[14px]" fill="none" stroke="#1c1f22" strokeWidth="1.600"><path d="M.8 7.200L7 1l6.200 6.200" /></svg>
        <svg viewBox="0 0 22 18" className="ml-[23px] h-[17px] w-[21px]" fill="#bcc1c5" stroke="#1c1f22" strokeWidth="1.500"><path d="M6 16c-3 0-5-1.500-5-4s2-4 4-4c.5-4 3-6.500 6.500-6.500S17 4 17.500 7c2.500.3 3.800 2 3.800 4.500 0 3-1.800 4.500-4.300 4.500z" /><path d="M3 1l16 16" strokeWidth="1.800" /></svg>
        <span className="ml-[23px] w-[32px] tracking-[-0.100px]">ENG</span>
        <svg viewBox="0 0 20 16" className="ml-[18px] h-4 w-5" fill="none" stroke="#1c1f22" strokeWidth="1.400" strokeLinecap="round"><path d="M1 6a13 13 0 0 1 18 0M3.800 8.800a9 9 0 0 1 12.400 0M6.600 11.500a5 5 0 0 1 6.800 0" /><circle cx="10" cy="14" r="1.300" fill="#1c1f22" stroke="none" /></svg>
        <svg viewBox="0 0 20 18" className="ml-[10px] h-[18px] w-5" fill="none" stroke="#1c1f22" strokeWidth="1.300" strokeLinecap="round" strokeLinejoin="round"><path d="M1 6.500h3l4-4v13l-4-4H1zM11 6.500a4 4 0 0 1 0 5M13.500 4a7.500 7.500 0 0 1 0 10M16 1.500a11 11 0 0 1 0 15" /></svg>
        <svg viewBox="0 0 20 12" className="ml-[10px] h-3 w-5"><rect x=".8" y=".8" width="15.800" height="10.400" rx="2.500" fill="none" stroke="#1c1f22" strokeWidth="1.500" /><path d="M3 3h5v6H3zM17.500 4h1.500c.6 0 1 .4 1 1v2c0 .6-.4 1-1 1h-1.500z" fill="#1c1f22" /></svg>
        <div className="ml-[17px] w-[81px] pb-[4px] text-right leading-5 tracking-[-0.200px] whitespace-nowrap"><div>15:36</div><div>01-10-2025</div></div>
      </div>
    </div>
  );
}

export default function App() {
  return (
    <div className="flex h-[1080px] w-[1920px] flex-col overflow-hidden bg-[#d7e1ea] font-['Open_Sans','Noto_Sans',sans-serif]">
      <div className="flex h-[1020px]">
        <Sidebar />
        <div className="ml-[5px] flex w-[1854px] flex-col">
          <TabStrip />
          <Toolbar />
          <Bookmarks />
          <Page />
        </div>
      </div>
      <Taskbar />
    </div>
  );
}
